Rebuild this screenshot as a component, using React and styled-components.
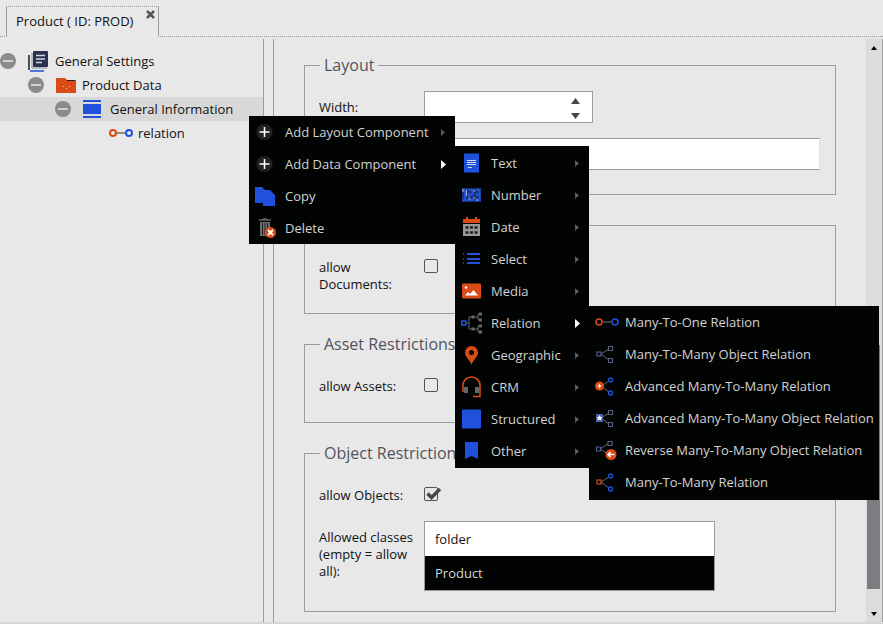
import React from "react";
import styled, { createGlobalStyle } from "styled-components";

const BLUE = "#1f51dc";
const ORANGE = "#da4c17";
const SLATE = "#53535c";
const LINE = "#9c9c9c";

const GlobalStyle = createGlobalStyle`
  *, *::before, *::after { box-sizing: border-box; }
  body {
    margin: 0;
    background: #e8e8e8;
    color: #111;
    font-family: "Open Sans", "Noto Sans", sans-serif;
    font-size: 13px;
    line-height: 17px;
  }
  button, input, select { font: inherit; color: inherit; }
  ul { list-style: none; margin: 0; padding: 0; }
`;

const Page = styled.div`
  display: flex;
  flex-direction: column;
  height: 100vh;
  border-bottom: 2px solid #d6d6d6;
`;

const TabBar = styled.div`
  display: flex;
  align-items: flex-end;
  height: 37px;
  padding-left: 6px;
  flex: none;
  border-bottom: 1px dotted ${LINE};
`;

const Tab = styled.div`
  display: flex;
  align-items: center;
  gap: 13px;
  height: 31px;
  margin-bottom: -1px;
  padding: 0 3px 0 9px;
  border: 1px solid ${LINE};
  border-bottom-color: #e8e8e8;
  border-top-style: dotted;
  background: #e8e8e8;
`;

const TabLabel = styled.button`
  padding: 0;
  border: 0;
  background: none;
`;

const CloseButton = styled.button`
  display: flex;
  align-self: flex-start;
  margin-top: 3px;
  padding: 0;
  border: 0;
  background: none;
`;

const Body = styled.div`
  display: flex;
  flex: 1;
  min-height: 0;
  padding-top: 2px;
`;

const TreePanel = styled.nav`
  flex: none;
  width: 264px;
  padding-top: 10px;
  border-right: 1px solid ${LINE};
`;

const TreeRow = styled.li`
  display: flex;
  align-items: center;
  height: 24px;
  padding-left: ${(p) => p.$indent}px;
  background: ${(p) => (p.$selected ? "#d8d8d8" : "transparent")};
`;

const ToggleButton = styled.button`
  display: flex;
  width: 28px;
  padding: 0;
  border: 0;
  background: none;
`;

const TreeIcon = styled.span`
  display: flex;
  width: ${(p) => p.$width || 27}px;
`;

const Main = styled.main`
  display: flex;
  flex: 1;
  min-width: 0;
  margin-left: 9px;
  border-left: 1px solid ${LINE};
  border-right: 1px solid ${LINE};
`;

const Form = styled.form`
  display: flex;
  flex-direction: column;
  gap: 20px;
  flex: 1;
  min-width: 0;
  overflow: hidden;
  padding: 16px 30px 10px;
`;

const Group = styled.fieldset`
  margin: 0;
  min-width: 0;
  padding: 16px 15px ${(p) => p.$bottom || 20}px 14px;
  border: 1px solid ${LINE};
`;

const GroupTitle = styled.legend`
  margin-left: 1px;
  padding: 0 4px;
  color: ${SLATE};
  font-size: 16px;
  line-height: 20px;
`;

const Fields = styled.div`
  display: flex;
  flex-direction: column;
  gap: ${(p) => p.$gap || 10}px;
`;

const Field = styled.div`
  display: flex;
  align-items: flex-start;
  min-height: 32px;
`;

const FieldLabel = styled.label`
  flex: none;
  width: 105px;
  padding: 8px 8px 0 0;
`;

const SpinBox = styled.div`
  display: flex;
  width: 169px;
  height: 32px;
  border: 1px solid ${LINE};
  background: #fff;
`;

const NumberInput = styled.input`
  flex: 1;
  min-width: 0;
  padding: 0 8px;
  border: 0;
  background: transparent;
`;

const Spinners = styled.div`
  display: flex;
  flex-direction: column;
  width: 34px;
`;

const SpinButton = styled.button`
  display: flex;
  flex: 1;
  align-items: center;
  justify-content: center;
  padding: 2px 0 0;
  border: 0;
  background: none;
`;

const TextInput = styled.input`
  flex: 1;
  min-width: 0;
  height: 32px;
  padding: 0 8px;
  border: 1px solid ${LINE};
  border-right-color: #e0e0e0;
  background: #fff;
`;

const CheckWrap = styled.span`
  display: grid;
  margin-top: 8px;
  height: 16px;
  > * { grid-area: 1 / 1; }
`;

const Check = styled.input.attrs({ type: "checkbox" })`
  appearance: none;
  width: 14px;
  height: 14px;
  margin: 0;
  border: 1px solid ${SLATE};
  border-radius: 2px;
`;

const ClassList = styled.select`
  width: 291px;
  height: 70px;
  margin: 0;
  padding: 0;
  overflow: hidden;
  appearance: none;
  border: 1px solid ${LINE};
  border-radius: 0;
  background: #fff;
  outline: 0;
`;

const ClassOption = styled.option`
  display: flex;
  align-items: center;
  height: 34px;
  padding: 0 10px;
  color: #111;
  &:checked {
    background: #020403 linear-gradient(#020403, #020403);
    -webkit-text-fill-color: #d6d6d6;
  }
`;

const ScrollTrack = styled.div`
  display: flex;
  flex-direction: column;
  flex: none;
  width: 16px;
  background: #dcdcdc;
`;

const ScrollButton = styled.button`
  display: flex;
  align-items: center;
  justify-content: center;
  flex: none;
  height: 17px;
  padding: 0;
  border: 0;
  background: none;
`;

const ScrollSpace = styled.div`
  flex: ${(p) => p.$share};
`;

const ScrollThumb = styled.div`
  flex: 244;
  margin: 0 2px 0 1px;
  background: #7c7c81;
`;

const Menu = styled.ul`
  position: absolute;
  z-index: 2;
  left: ${(p) => p.$left};
  top: ${(p) => p.$top}px;
  width: max-content;
  min-width: ${(p) => p.$width}px;
  padding: ${(p) => p.$pad || "0"};
  background: #020403;
  color: #d2d2d2;
`;

const MenuEntry = styled.li`
  position: relative;
`;

const MenuButton = styled.button`
  display: flex;
  align-items: center;
  width: 100%;
  height: 32px;
  padding: 0 ${(p) => (p.$arrow ? 8 : 4)}px 0 6px;
  border: 0;
  background: none;
  text-align: left;
  white-space: nowrap;
`;

const MenuIcon = styled.span`
  display: flex;
  width: 30px;
`;

const MenuText = styled.span`
  flex: 1;
`;

const MenuArrow = styled.svg`
  width: 6px;
  height: 9px;
  fill: ${(p) => (p.$open ? "#fff" : "#5a5a60")};
`;

const Svg = ({ children, w = 20, h = 20, box }) => (
  <svg width={w} height={h} viewBox={box || `0 0 ${w} ${h}`} fill="none" aria-hidden="true">
    {children}
  </svg>
);

const Minus = () => (
  <Svg w={16} h={16}>
    <circle cx="8" cy="8" r="8" fill="#8b8b8b" />
    <path d="M3 8h10" stroke="#e8e8e8" strokeWidth="1.5" />
  </Svg>
);

const Pages = () => (
  <Svg w={21} h={21}>
    <path d="M1 4v15" stroke="#4a4e56" strokeWidth="2" />
    <path d="M2 20h14" stroke={BLUE} strokeWidth="1.5" />
    <path d="M4 2v15h15" stroke="#8a8c94" strokeWidth="1" />
    <rect x="5" y="0" width="15" height="16" rx="1" fill="#2b3150" />
    <path d="M8 4.500h9M8 8h9M8 11.500h6" stroke="#d5d8e4" strokeWidth="1.3" />
  </Svg>
);

const Folder = () => (
  <Svg w={20} h={17}>
    <path d="M0 2q0-1 1-1h8l2 2h9v13H0z" fill={ORANGE} />
    <path d="M11 3.500h8" stroke="#222" strokeWidth="1" />
    <path d="M7 9.500h1M13 9.500h1M10 11.500h1" stroke="#f2c8b6" />
  </Svg>
);

const PanelIcon = () => (
  <Svg w={19} h={18}>
    <path d="M0 1h18M0 17h18" stroke={BLUE} strokeWidth="2" />
    <rect y="4" width="18" height="10" fill={BLUE} />
  </Svg>
);

const OneLink = ({ sw = 2 }) => (
  <Svg w={24} h={10}>
    <path d="M8 5h8" stroke="#5e5e62" strokeWidth="1.3" />
    <circle cx="4" cy="5" r="3" stroke={ORANGE} strokeWidth={sw} />
    <circle cx="20" cy="5" r="3" stroke={BLUE} strokeWidth={sw} />
  </Svg>
);

const Plus = () => (
  <Svg>
    <circle cx="9.500" cy="10" r="8" fill="#202222" />
    <path d="M9.500 5v10M4.500 10h10" stroke="#fff" strokeWidth="1.5" />
  </Svg>
);

const CopyIcon = () => (
  <Svg>
    <path d="M0 1h7l3 3h5l5 5v11H8v-3H0z" fill={BLUE} />
  </Svg>
);

const TrashIcon = () => (
  <Svg w={22} h={20}>
    <path d="M4 2h12M8 1h4" stroke="#66666b" strokeWidth="1.5" />
    <path d="M5 4h10v14H5z" fill="#6b6b70" />
    <path d="M7.500 5v12M10 5v12M12.500 5v12" stroke="#222" />
    <circle cx="15.500" cy="14.500" r="5.500" fill={ORANGE} />
    <path d="M13 12l5 5M18 12l-5 5" stroke="#fff" strokeWidth="1.8" />
  </Svg>
);

const TextIcon = () => (
  <Svg>
    <rect x="3" y="0.500" width="15" height="19" fill={BLUE} />
    <path d="M6 7.500h9M6 9.500h9M6 11.500h9M7 14.500h4" stroke="#d4dbe8" strokeWidth="1" />
  </Svg>
);

const NumberIcon = () => (
  <Svg>
    <rect x="1" y="3" width="19" height="14" fill="#1c3474" />
    <path d="M1 5h3v10M1.500 15h5M7.500 5h4v4.500H8V15h5M14 5h4.500v10H14M14.500 9.500H18" stroke={BLUE} strokeWidth="2" />
    <path d="M5.500 5v6M2 4v3M7.500 14h2M12 13h2M13 5v2M16 14v2" stroke="#a9b4d0" />
  </Svg>
);

const DateIcon = () => (
  <Svg>
    <path d="M2 2h3V0h2v2h7V0h2v2h3v4H2z" fill={ORANGE} />
    <rect x="2" y="7" width="17" height="12" fill="#98989b" />
    <path d="M4.500 10.500h3M9 10.500h3M13.500 10.500h3M4.500 15.500h3M9 15.500h3M13.500 15.500h3" stroke="#1c1c1c" strokeWidth="2.500" />
  </Svg>
);

const SelectIcon = () => (
  <Svg>
    <path d="M6 5h13M6 10h13M6 14h13" stroke={BLUE} strokeWidth="2" />
    <path d="M2 5h1M2 10h1M2 14h1" stroke={BLUE} strokeWidth="1.500" />
  </Svg>
);

const MediaIcon = () => (
  <Svg>
    <rect x="1" y="2.500" width="19" height="15" rx="1" fill={ORANGE} />
    <circle cx="5" cy="6.500" r="1.200" fill="#fff" />
    <path d="M4 14.500l3-3.500 2 2 3.500-4 4.500 5.500z" fill="#fff" />
  </Svg>
);

const RelationIcon = () => (
  <Svg w={22} h={22}>
    <rect x="0.800" y="9" width="4" height="4" stroke={BLUE} strokeWidth="1.600" />
    <path d="M5 11h3M12 5H8v12h4M12 5h5M20 2h-3v6h3M12 17h5M20 14h-3v6h3" stroke="#68686e" />
    <path d="M10.500 3.500h3v3h-3zM10.500 15.500h3v3h-3zM18 .5h3v3h-3zM18 6.500h3v3h-3zM18 12.500h3v3h-3zM18 18.500h3v3h-3z" fill="#68686e" />
  </Svg>
);

const PinIcon = () => (
  <Svg>
    <path fillRule="evenodd" d="M10.500 1a6.500 6.500 0 0 0-6.500 6.500c0 4.500 4.500 7 6.500 12 2-5 6.500-7.500 6.500-12A6.500 6.500 0 0 0 10.500 1zm0 4a2.500 2.500 0 1 1 0 5 2.500 2.500 0 0 1 0-5z" fill={ORANGE} />
  </Svg>
);

const HeadsetIcon = () => (
  <Svg w={20} h={22}>
    <path d="M2 16V9a8.500 8 0 0 1 17 0v11.500h-7" stroke={ORANGE} strokeWidth="1.500" />
    <path d="M3 11h4v6H3zM14 11h4v6h-4z" fill="#66666b" />
  </Svg>
);

const SquareIcon = () => (
  <Svg>
    <rect x="1" y="0.500" width="19" height="19" rx="1" fill={BLUE} />
  </Svg>
);

const BookmarkIcon = () => (
  <Svg>
    <path d="M4 1h13v17l-6.500-3L4 18z" fill={BLUE} />
  </Svg>
);

const Branch = ({ root, ends, round, children }) => (
  <Svg w={22} h={20}>
    <path d="M6 10l8-5M6 10l8 6" stroke="#68686e" />
    {round ? (
      <>
        <circle cx="15.500" cy="4" r="2" stroke={ends} strokeWidth="1.300" />
        <circle cx="15.500" cy="17" r="2" stroke={ends} strokeWidth="1.300" />
      </>
    ) : (
      <path d="M13.500 2.500h4v4h-4zM13.500 14.500h4v4h-4z" stroke={ends} strokeWidth="1.200" />
    )}
    {root && <rect x="2" y="8" width="4" height="4" stroke={root} strokeWidth="1.200" />}
    {children}
  </Svg>
);

const AdvancedIcon = () => (
  <Branch ends={BLUE} round>
    <circle cx="4.500" cy="10" r="4.500" fill={ORANGE} />
    <path d="M4.500 7.500l.8 1.700 1.700.8-1.700.8-.8 1.700-.8-1.700L2 10l1.700-.8z" fill="#fff" />
  </Branch>
);

const AdvancedObjectIcon = () => (
  <Branch ends="#59607c">
    <rect x="1" y="6" width="7" height="8" fill="#4a5fa8" />
    <path d="M4.500 7l1 2h2l-1.500 1.500.5 2-2-1-2 1 .5-2L1.500 9h2z" fill="#fff" />
  </Branch>
);

const ReverseIcon = () => (
  <Svg w={22} h={20}>
    <path d="M5 9l8-5M5 9l8 5" stroke="#68686e" />
    <path d="M13 1.500h4v4h-4z" stroke="#59607c" strokeWidth="1.200" />
    <path d="M1.500 7h4v4h-4z" stroke="#4d5c92" strokeWidth="1.200" />
    <circle cx="16" cy="14.500" r="5.500" fill={ORANGE} />
    <path d="M19.500 14.500h-6M15.500 12L13 14.500l2.500 2.500" stroke="#fff" strokeWidth="1.500" />
  </Svg>
);

const Triangle = ({ up, w = 9, h = 6, color = "#45454b" }) => (
  <Svg w={w} h={h} box="0 0 9 6">
    <path d={up ? "M0 6L4.500 0 9 6z" : "M0 0L4.500 6 9 0z"} fill={color} />
  </Svg>
);

const CheckMark = () => (
  <svg width="18" height="16" viewBox="0 0 18 16" fill="none" pointerEvents="none">
    <path d="M3.500 6.500l4 4L16 2" stroke="#46464d" strokeWidth="3.500" />
  </svg>
);

const relationItems = [
  { text: "Many-To-One Relation", icon: <OneLink sw={1.5} /> },
  { text: "Many-To-Many Object Relation", icon: <Branch root="#4d5c92" ends="#59607c" /> },
  { text: "Advanced Many-To-Many Relation", icon: <AdvancedIcon /> },
  { text: "Advanced Many-To-Many Object Relation", icon: <AdvancedObjectIcon /> },
  { text: "Reverse Many-To-Many Object Relation", icon: <ReverseIcon /> },
  { text: "Many-To-Many Relation", icon: <Branch root={ORANGE} ends={BLUE} round /> },
];

const dataItems = [
  { text: "Text", icon: <TextIcon />, arrow: true },
  { text: "Number", icon: <NumberIcon />, arrow: true },
  { text: "Date", icon: <DateIcon />, arrow: true },
  { text: "Select", icon: <SelectIcon />, arrow: true },
  { text: "Media", icon: <MediaIcon />, arrow: true },
  {
    text: "Relation",
    icon: <RelationIcon />,
    arrow: true,
    sub: { items: relationItems, width: 290, top: -1, pad: "0 0 2px" },
  },
  { text: "Geographic", icon: <PinIcon />, arrow: true },
  { text: "CRM", icon: <HeadsetIcon />, arrow: true },
  { text: "Structured", icon: <SquareIcon />, arrow: true },
  { text: "Other", icon: <BookmarkIcon />, arrow: true },
];

const contextItems = [
  { text: "Add Layout Component", icon: <Plus />, arrow: true },
  {
    text: "Add Data Component",
    icon: <Plus />,
    arrow: true,
    sub: { items: dataItems, width: 134, top: -2, pad: "1px 0" },
  },
  { text: "Copy", icon: <CopyIcon /> },
  { text: "Delete", icon: <TrashIcon /> },
];

function MenuList({ items, left = "100%", top, width, pad, label }) {
  return (
    <Menu role="menu" aria-label={label} $left={left} $top={top} $width={width} $pad={pad}>
      {items.map((item) => (
        <MenuEntry key={item.text} role="none">
          <MenuButton
            type="button"
            role="menuitem"
            aria-haspopup={item.arrow ? "menu" : undefined}
            $arrow={item.arrow}
          >
            <MenuIcon>{item.icon}</MenuIcon>
            <MenuText>{item.text}</MenuText>
            {item.arrow && (
              <MenuArrow viewBox="0 0 6 9" $open={Boolean(item.sub)} aria-hidden="true">
                <path d={item.sub ? "M0 0L5 4.500 0 9z" : "M0 1L4 4.500 0 8z"} />
              </MenuArrow>
            )}
          </MenuButton>
          {item.sub && <MenuList {...item.sub} label={item.text} />}
        </MenuEntry>
      ))}
    </Menu>
  );
}

export default function App() {
  return (
    <Page>
      <GlobalStyle />
      <TabBar>
        <Tab>
          <TabLabel type="button">Product ( ID: PROD)</TabLabel>
          <CloseButton type="button" aria-label="Close tab">
            <Svg w={9} h={9}>
              <path d="M1 1l7 7M8 1L1 8" stroke="#555" strokeWidth="2.500" />
            </Svg>
          </CloseButton>
        </Tab>
      </TabBar>
      <Body>
        <TreePanel aria-label="Class structure">
          <ul>
            <TreeRow $indent={0}>
              <ToggleButton type="button" aria-label="Collapse"><Minus /></ToggleButton>
              <TreeIcon><Pages /></TreeIcon>
              General Settings
            </TreeRow>
            <TreeRow $indent={28}>
              <ToggleButton type="button" aria-label="Collapse"><Minus /></ToggleButton>
              <TreeIcon $width={26}><Folder /></TreeIcon>
              Product Data
            </TreeRow>
            <TreeRow $indent={55} $selected>
              <ToggleButton type="button" aria-label="Collapse"><Minus /></ToggleButton>
              <TreeIcon><PanelIcon /></TreeIcon>
              General Information
            </TreeRow>
            <TreeRow $indent={109}>
              <TreeIcon $width={29}><OneLink /></TreeIcon>
              relation
            </TreeRow>
          </ul>
        </TreePanel>
        <Main>
          <Form>
            <Group $bottom={24}>
              <GroupTitle>Layout</GroupTitle>
              <Fields $gap={15}>
                <Field>
                  <FieldLabel htmlFor="width">Width:</FieldLabel>
                  <SpinBox>
                    <NumberInput id="width" type="text" inputMode="numeric" />
                    <Spinners>
                      <SpinButton type="button" aria-label="Increase width"><Triangle up /></SpinButton>
                      <SpinButton type="button" aria-label="Decrease width"><Triangle /></SpinButton>
                    </Spinners>
                  </SpinBox>
                </Field>
                <Field>
                  <FieldLabel htmlFor="height" aria-label="Height" />
                  <TextInput id="height" type="text" aria-label="Height" />
                </Field>
              </Fields>
            </Group>
            <Group>
              <GroupTitle aria-label="Documents">&nbsp;</GroupTitle>
              <Fields>
                <Field>
                  <FieldLabel htmlFor="documents">allow Documents:</FieldLabel>
                  <CheckWrap><Check id="documents" /></CheckWrap>
                </Field>
              </Fields>
            </Group>
            <Group>
              <GroupTitle>Asset Restrictions</GroupTitle>
              <Fields>
                <Field>
                  <FieldLabel htmlFor="assets">allow Assets:</FieldLabel>
                  <CheckWrap><Check id="assets" /></CheckWrap>
                </Field>
              </Fields>
            </Group>
            <Group>
              <GroupTitle>Object Restrictions</GroupTitle>
              <Fields>
                <Field>
                  <FieldLabel htmlFor="objects">allow Objects:</FieldLabel>
                  <CheckWrap>
                    <Check id="objects" defaultChecked />
                    <CheckMark />
                  </CheckWrap>
                </Field>
                <Field>
                  <FieldLabel htmlFor="classes">Allowed classes (empty = allow all):</FieldLabel>
                  <ClassList id="classes" multiple size={2} defaultValue={["Product"]}>
                    <ClassOption value="folder">folder</ClassOption>
                    <ClassOption value="Product">Product</ClassOption>
                  </ClassList>
                </Field>
              </Fields>
            </Group>
          </Form>
          <ScrollTrack>
            <ScrollButton type="button" aria-label="Scroll up"><Triangle up w={8} h={4} color="#000" /></ScrollButton>
            <ScrollSpace $share={289} />
            <ScrollThumb />
            <ScrollSpace $share={16} />
            <ScrollButton type="button" aria-label="Scroll down"><Triangle w={8} h={4} color="#000" /></ScrollButton>
          </ScrollTrack>
        </Main>
      </Body>
      <MenuList items={contextItems} left="249px" top={116} width={206} label="General Information" />
    </Page>
  );
}
